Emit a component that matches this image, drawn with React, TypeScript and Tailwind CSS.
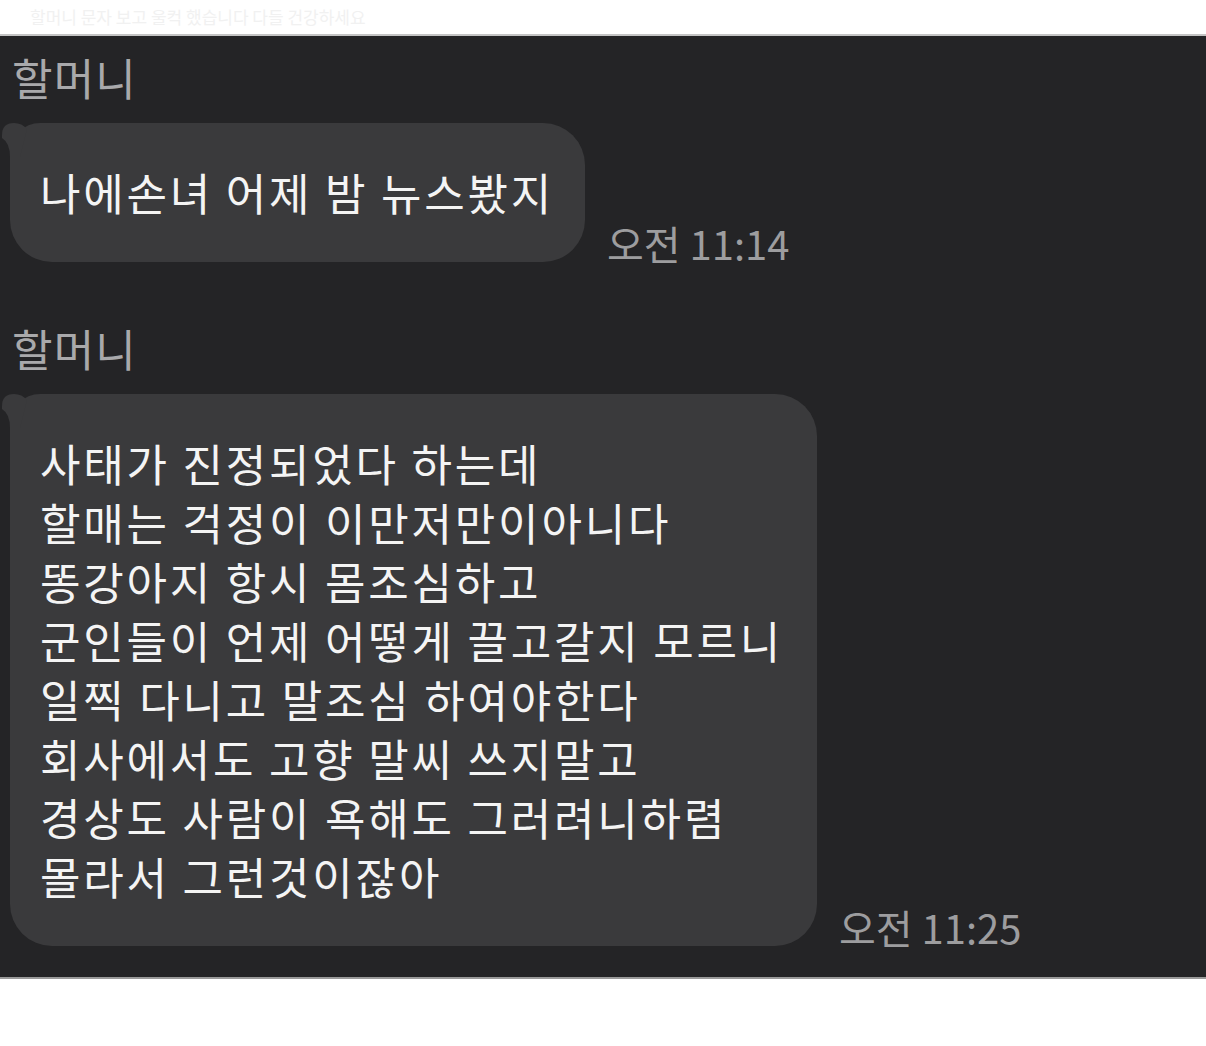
import React from 'react';

const font = { fontFamily: '"Noto Sans CJK KR", "Noto Sans", sans-serif' };

const Tail: React.FC = () => (
  <svg
    className="absolute left-[-10px] top-0"
    width="40"
    height="40"
    viewBox="0 0 40 40"
    aria-hidden="true"
  >
    <path d="M2 12 Q2 0 14 0 Q22 0 27 6 L20 34 L10 34 Q10 20 2 15 Z" fill="#3a3a3c" />
  </svg>
);

type MessageProps = {
  name: string;
  lines: string[];
  time: string;
  width: string;
};

const Message: React.FC<MessageProps> = ({ name, lines, time, width }) => (
  <div>
    <div className="pl-[12px] text-[44px] leading-[48px] tracking-[1.2px] text-[#a9a9ab]">{name}</div>
    <div className="mt-[22px] flex items-end">
      <div className={`relative ml-[10px] ${width} rounded-[42px] rounded-tl-[30px] bg-[#3a3a3c] pl-[30px] pr-[30px] py-[40px]`}>
        <Tail />
        {lines.map((line, i) => (
          <div key={i} className="whitespace-nowrap text-[44px] leading-[59px] tracking-[2.8px] text-[#f4f4f4]">
            {line}
          </div>
        ))}
      </div>
      <div className="ml-[22px] text-[40px] leading-[38px] text-[#9d9d9f] whitespace-nowrap">{time}</div>
    </div>
  </div>
);

export default function App() {
  return (
    <div className="w-[1206px] h-[1046px] bg-white flex flex-col" style={font}>
      {/* faint leftover text from the previous shot */}
      <div className="h-[34px] pl-[30px] pt-[6px]">
        <div className="text-[17px] leading-[22px] text-[#f1f1f1] whitespace-nowrap">
          할머니 문자 보고 울컥 했습니다 다들 건강하세요
        </div>
      </div>
      <div className="h-[2px] bg-[#c4c4c4]" />
      <div className="bg-[#242426] pt-[17px] pb-[31px]">
        <Message
          name="할머니"
          lines={['나에손녀 어제 밤 뉴스봤지']}
          time="오전 11:14"
          width="w-[575px]"
        />
        <div className="mt-[62px]">
          <Message
            name="할머니"
            lines={[
              '사태가 진정되었다 하는데',
              '할매는 걱정이 이만저만이아니다',
              '똥강아지 항시 몸조심하고',
              '군인들이 언제 어떻게 끌고갈지 모르니',
              '일찍 다니고 말조심 하여야한다',
              '회사에서도 고향 말씨 쓰지말고',
              '경상도 사람이 욕해도 그러려니하렴',
              '몰라서 그런것이잖아',
            ]}
            time="오전 11:25"
            width="w-[807px]"
          />
        </div>
      </div>
      <div className="h-[2px] bg-[#9a9a9a]" />
      <div className="flex-1 bg-white" />
    </div>
  );
}
